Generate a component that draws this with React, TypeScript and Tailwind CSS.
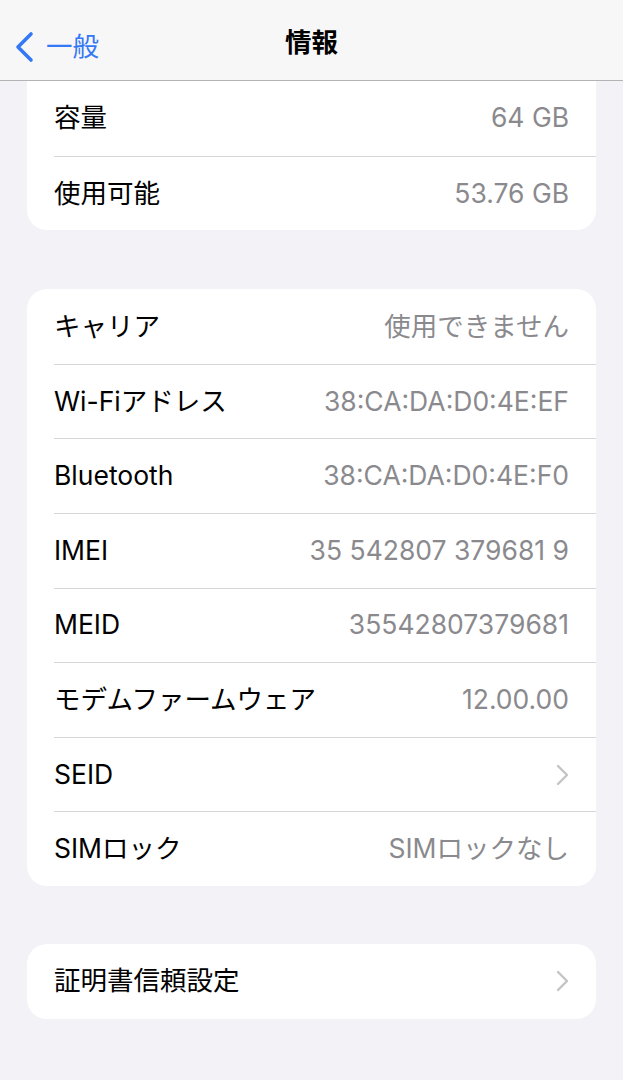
const font = 'font-["Inter","Noto_Sans_CJK_JP",sans-serif]';

type Row = { label: string; value?: string; chevron?: boolean };

const storage: Row[] = [
  { label: '容量', value: '64 GB' },
  { label: '使用可能', value: '53.76 GB' },
];

const network: Row[] = [
  { label: 'キャリア', value: '使用できません' },
  { label: 'Wi-Fiアドレス', value: '38:CA:DA:D0:4E:EF' },
  { label: 'Bluetooth', value: '38:CA:DA:D0:4E:F0' },
  { label: 'IMEI', value: '35 542807 379681 9' },
  { label: 'MEID', value: '35542807379681' },
  { label: 'モデムファームウェア', value: '12.00.00' },
  { label: 'SEID', chevron: true },
  { label: 'SIMロック', value: 'SIMロックなし' },
];

const certs: Row[] = [{ label: '証明書信頼設定', chevron: true }];

function Chevron() {
  return (
    <svg width="13" height="22" viewBox="0 0 13 22" fill="none">
      <path d="M2 2l9 9-9 9" stroke="#c4c4c7" strokeWidth="2.4" strokeLinecap="round" strokeLinejoin="round" />
    </svg>
  );
}

function Group({ rows, top = true }: { rows: Row[]; top?: boolean }) {
  return (
    <div className={`mx-[27px] bg-white pl-[27px] ${top ? 'rounded-[20px]' : 'rounded-b-[20px]'}`}>
      {rows.map((r, i) => (
        <div
          key={r.label}
          className={`flex h-[74.6px] items-center justify-between pr-[27px] ${i > 0 ? 'border-t border-[#d6d6da]' : ''}`}
        >
          <span className="text-[26.5px] text-black">{r.label}</span>
          {r.chevron ? <Chevron /> : <span className="text-[26.5px] text-[#8a8a8e]">{r.value}</span>}
        </div>
      ))}
    </div>
  );
}

export default function App() {
  return (
    <div className={`${font} min-h-[1080px] bg-[#f2f2f7]`}>
      <div className="relative flex h-[81px] items-center justify-center border-b border-[#b3b3b3] bg-[#f7f7f7] pt-[5px]">
        <div className="absolute left-[14px] top-[27px] flex items-center gap-[12px]">
          <svg width="20" height="32" viewBox="0 0 20 32" fill="none">
            <path d="M17 3L4 16l13 13" stroke="#3478f6" strokeWidth="3.6" strokeLinecap="round" strokeLinejoin="round" />
          </svg>
          <span className="text-[26.5px] text-[#3478f6]">一般</span>
        </div>
        <span className="text-[26.5px] font-bold text-black">情報</span>
      </div>
      <Group rows={storage} top={false} />
      <div className="h-[59px]" />
      <Group rows={network} />
      <div className="h-[58px]" />
      <Group rows={certs} />
    </div>
  );
}
